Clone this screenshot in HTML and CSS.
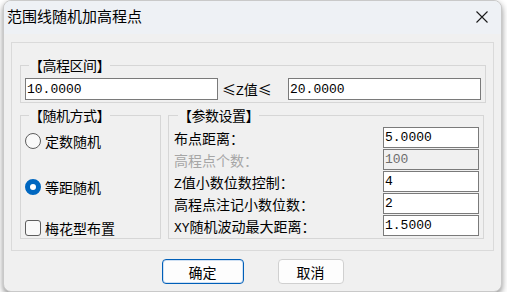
FILE: index.html
```html
<!DOCTYPE html>
<html lang="zh-CN">
<head>
    <meta charset="UTF-8">
    <title>范围线随机加高程点</title>
    <link rel="stylesheet" href="styles.css">
</head>
<body>
    <div class="window">
        <div class="titlebar">
            <span class="title">范围线随机加高程点</span>
            <span class="close">
                <svg width="12" height="12" viewBox="0 0 12 12">
                    <path d="M0.5 0.5 L11.5 11.5 M11.5 0.5 L0.5 11.5" stroke="#1a1a1a" stroke-width="1.1" fill="none"/>
                </svg>
            </span>
        </div>
        <div class="client">
            <div class="frame">
                <fieldset class="group range">
                    <legend>【高程区间】</legend>
                    <div class="range-row">
                        <input class="field" type="text" value="10.0000">
                        <span class="range-label">≤<span class="latin">Z</span>值≤</span>
                        <input class="field" type="text" value="20.0000">
                    </div>
                </fieldset>
                <div class="lower">
                    <fieldset class="group mode">
                        <legend>【随机方式】</legend>
                        <label class="option opt-count"><input type="radio" name="mode"><span>定数随机</span></label>
                        <label class="option opt-step"><input type="radio" name="mode" checked><span>等距随机</span></label>
                        <label class="option opt-plum"><input type="checkbox"><span>梅花型布置</span></label>
                    </fieldset>
                    <fieldset class="group params">
                        <legend>【参数设置】</legend>
                        <div class="param"><span>布点距离：</span><input class="field" type="text" value="5.0000"></div>
                        <div class="param disabled"><span>高程点个数：</span><input class="field" type="text" value="100" disabled></div>
                        <div class="param"><span><span class="latin">Z</span>值小数位数控制：</span><input class="field" type="text" value="4"></div>
                        <div class="param"><span>高程点注记小数位数：</span><input class="field" type="text" value="2"></div>
                        <div class="param"><span><span class="latin">XY</span>随机波动最大距离：</span><input class="field" type="text" value="1.5000"></div>
                    </fieldset>
                </div>
            </div>
            <div class="buttons">
                <button class="btn btn-ok">确定</button>
                <button class="btn btn-cancel">取消</button>
            </div>
        </div>
    </div>
</body>
</html>
```

FILE: styles.css
```css
html {
    background-color: #fff;
}
body {
    margin: 0;
    padding: 0;
    font-family: "Noto Sans CJK SC", sans-serif;
    font-size: 14px;
    color: #000;
}
.latin {
    font-family: "Liberation Mono", monospace;
    font-size: 13px;
}
.window {
    width: 499px;
    height: 292px;
    margin-left: 3px;
    box-sizing: border-box;
    border: 1px solid #c9c9c9;
    border-radius: 8px;
    background-color: #f0f0f0;
    box-shadow: 0 3px 6px rgba(0, 0, 0, 0.45);
    overflow: hidden;
}
.titlebar {
    height: 33px;
    display: flex;
    align-items: center;
    justify-content: space-between;
    background-color: #eef1f5;
}
.title {
    font-size: 15px;
    padding-left: 3px;
    margin-top: -5px;
}
.close {
    display: flex;
    margin-right: 13px;
    margin-top: -1px;
}
.client {
    padding: 8px 7px 0 7px;
}
.frame {
    border: 1px solid #dadada;
    padding: 12px 7px 11px 8px;
}
.group {
    margin: 0;
    min-width: 0;
    border: 1px solid #d6d6d6;
    padding: 0 4px;
}
.group legend {
    line-height: 20px;
    padding: 0;
    margin-left: 4px;
    letter-spacing: -0.5px;
}
.range {
    padding-top: 3px;
    padding-bottom: 2px;
}
.range-row {
    display: flex;
    align-items: center;
}
.range-label {
    flex: 1;
    padding-left: 4px;
}
.field {
    box-sizing: border-box;
    width: 193px;
    height: 22px;
    margin: 0;
    padding: 0 1px;
    border: 1px solid #7a7a7a;
    background-color: #fff;
    font-family: "Liberation Mono", monospace;
    font-size: 13px;
    color: #000;
    outline: none;
}
.lower {
    display: flex;
    gap: 7px;
    margin-top: 2px;
}
.mode {
    width: 141px;
    box-sizing: border-box;
    display: flex;
    flex-direction: column;
    padding-top: 3px;
}
.option {
    display: flex;
    align-items: center;
    height: 20px;
    gap: 4px;
}
.opt-count {
    margin-top: 3px;
}
.opt-step {
    margin-top: 26px;
}
.opt-plum {
    margin-top: 21px;
}
.option input {
    appearance: none;
    margin: 0;
    width: 16px;
    height: 16px;
    box-sizing: border-box;
    border: 1px solid #5d5d5d;
    background-color: #f9f9f9;
}
.option input[type="radio"] {
    border-radius: 50%;
}
.option input[type="radio"]:checked {
    border: 5px solid #0067c0;
    background-color: #fff;
}
.option input[type="checkbox"] {
    border-radius: 3px;
}
.params {
    flex: 1;
    margin-right: 2px;
    padding: 2px 4px 0 5px;
}
.param {
    display: flex;
    justify-content: space-between;
    align-items: center;
    height: 22px;
}
.param .field {
    width: 96px;
    height: 21px;
    margin-bottom: 1px;
}
.param.disabled span {
    color: #a6a6a6;
}
.param .field:disabled {
    background-color: #f0f0f0;
    color: #6d6d6d;
}
.buttons {
    display: flex;
    justify-content: center;
    gap: 34px;
    margin-top: 8px;
}
.btn {
    height: 25px;
    box-sizing: border-box;
    border: 1px solid #d0d0d0;
    border-radius: 4px;
    background-color: #fdfdfd;
    font-family: "Noto Sans CJK SC", sans-serif;
    font-size: 14px;
    color: #000;
    padding: 0;
}
.btn-ok {
    width: 82px;
    border: 1px solid #005fb8;
    box-shadow: inset 0 0 0 1px #cfe0f3;
}
.btn-cancel {
    width: 66px;
}
```
